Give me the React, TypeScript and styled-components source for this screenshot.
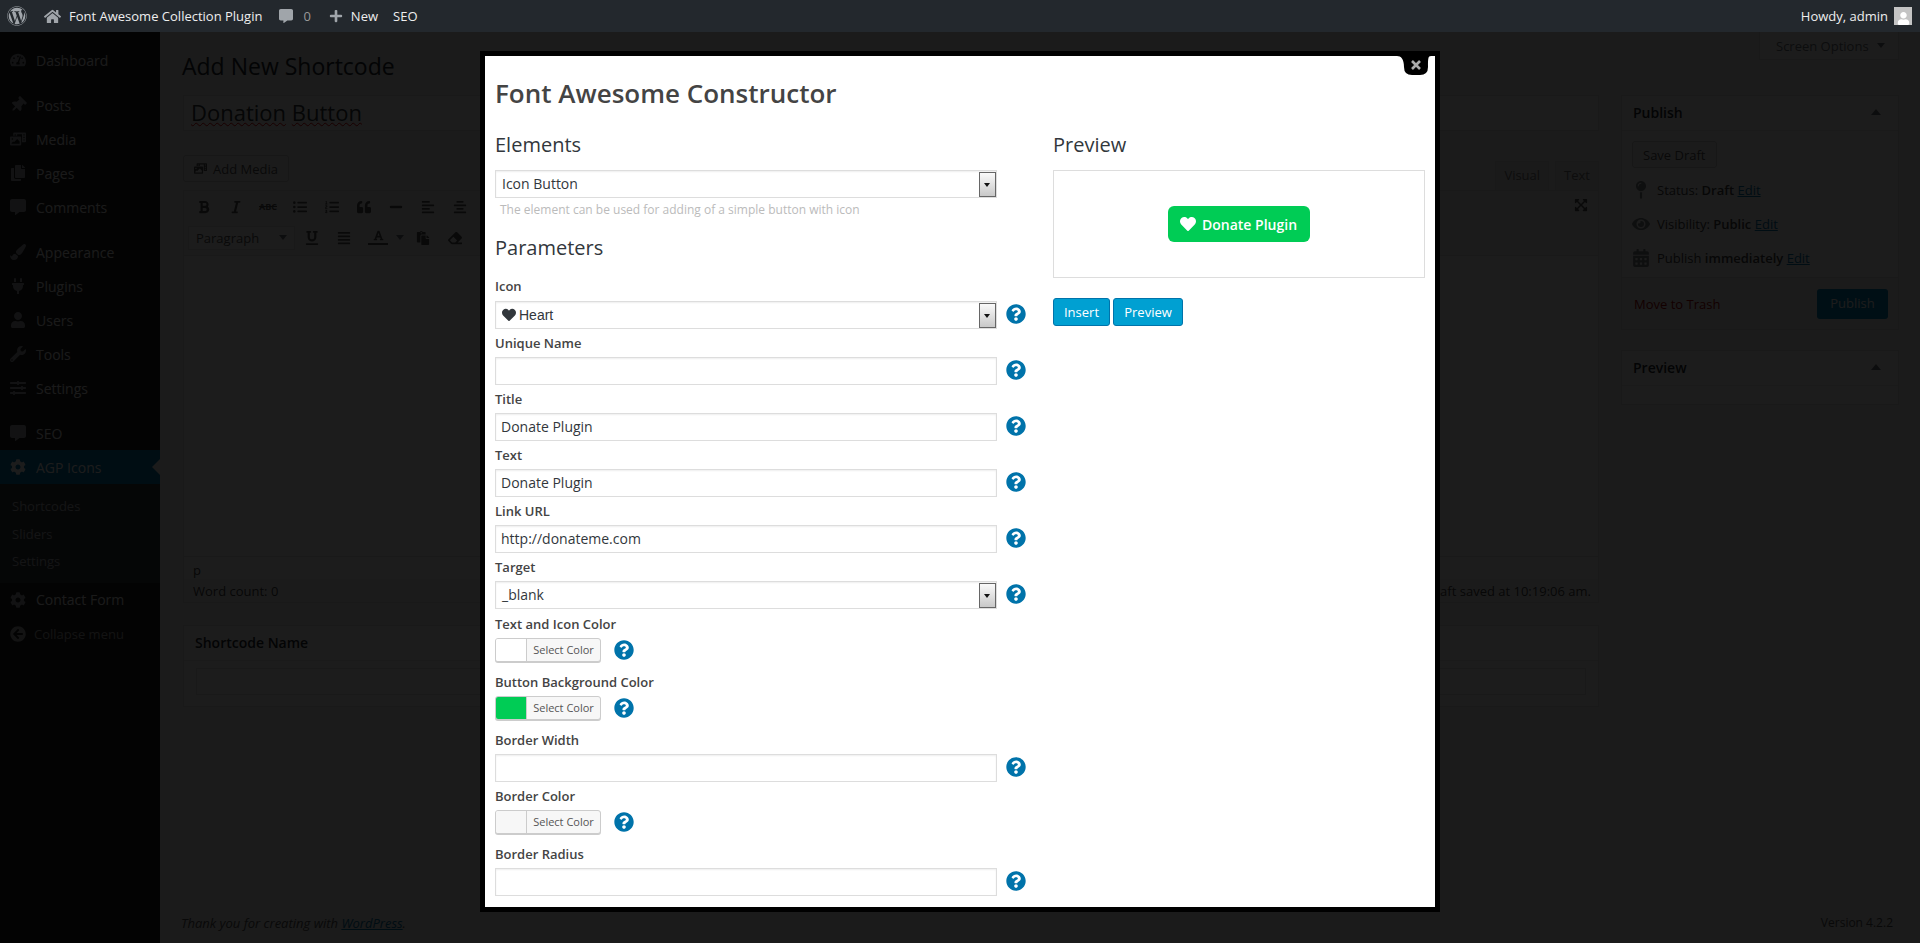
import styled, { createGlobalStyle } from "styled-components";
import {
  FaAlignCenter,
  FaAlignJustify,
  FaAlignLeft,
  FaArrowCircleLeft,
  FaBold,
  FaCalendarAlt,
  FaCog,
  FaCommentAlt,
  FaCopy,
  FaEraser,
  FaExpandArrowsAlt,
  FaEye,
  FaFont,
  FaHeart,
  FaHome,
  FaItalic,
  FaListOl,
  FaListUl,
  FaMapPin,
  FaMinus,
  FaPaintBrush,
  FaPaste,
  FaPhotoVideo,
  FaPlug,
  FaPlus,
  FaQuestionCircle,
  FaQuoteLeft,
  FaSlidersH,
  FaTachometerAlt,
  FaThumbtack,
  FaUnderline,
  FaUser,
  FaWordpress,
  FaWrench,
} from "react-icons/fa";

const Global = createGlobalStyle`
  html, body {
    margin: 0;
    height: 100%;
    overflow: hidden;
    background: #f1f1f1;
  }
  * { box-sizing: border-box; }
  body, input {
    font-family: "Open Sans", "Liberation Sans", sans-serif;
    font-size: 13px;
    color: #444;
  }
`;

const menu = [
  { label: "Dashboard", icon: <FaTachometerAlt />, gap: 1 },
  { label: "Posts", icon: <FaThumbtack style={{ transform: "rotate(45deg)" }} />, gap: 1 },
  { label: "Media", icon: <FaPhotoVideo /> },
  { label: "Pages", icon: <FaCopy /> },
  { label: "Comments", icon: <FaCommentAlt /> },
  { label: "Appearance", icon: <FaPaintBrush />, gap: 1 },
  { label: "Plugins", icon: <FaPlug /> },
  { label: "Users", icon: <FaUser /> },
  { label: "Tools", icon: <FaWrench /> },
  { label: "Settings", icon: <FaSlidersH /> },
  { label: "SEO", icon: <FaCommentAlt />, gap: 1 },
];

const HelpMark = ({ $small }: { $small?: boolean }) => (
  <Styled.Help $small={$small}>
    <FaQuestionCircle />
  </Styled.Help>
);

const TextField = ({ label, value = "" }: { label: string; value?: string }) => (
  <Styled.Field>
    <Styled.Label>{label}</Styled.Label>
    <Styled.ControlRow>
      <Styled.Input defaultValue={value} readOnly />
      <HelpMark />
    </Styled.ControlRow>
  </Styled.Field>
);

const SelectBox = ({ children, $arial }: { children: React.ReactNode; $arial?: boolean }) => (
  <Styled.Select $arial={$arial}>
    {children}
    <Styled.SelectArrow />
  </Styled.Select>
);

const ColorField = ({ label, color }: { label: string; color: string }) => (
  <Styled.ColorWrap>
    <Styled.Label>{label}</Styled.Label>
    <Styled.ControlRow>
      <Styled.Picker>
        <Styled.Swatch $color={color} />
        <Styled.PickerText>Select Color</Styled.PickerText>
      </Styled.Picker>
      <HelpMark $small />
    </Styled.ControlRow>
  </Styled.ColorWrap>
);

export default function App() {
  return (
    <Styled.Page>
      <Global />
      <Styled.AdminBar>
        <Styled.BarGroup>
          <Styled.BarLogo>
            <FaWordpress />
          </Styled.BarLogo>
          <Styled.BarItem $left={17}>
            <FaHome size={17} />
            Font Awesome Collection Plugin
          </Styled.BarItem>
          <Styled.BarItem $left={17} $muted>
            <FaCommentAlt size={14} />
            <span>0</span>
          </Styled.BarItem>
          <Styled.BarItem $left={18}>
            <FaPlus size={14} />
            New
          </Styled.BarItem>
          <Styled.BarItem $left={15}>SEO</Styled.BarItem>
        </Styled.BarGroup>
        <Styled.BarItem>
          Howdy, admin
          <Styled.Avatar>
            <FaUser size={13} />
          </Styled.Avatar>
        </Styled.BarItem>
      </Styled.AdminBar>

      <Styled.Body>
        <Styled.Sidebar>
          {menu.map((m) => (
            <Styled.MenuItem key={m.label + m.gap} $gap={!!m.gap}>
              {m.icon}
              {m.label}
            </Styled.MenuItem>
          ))}
          <Styled.MenuActive>
            <FaCog />
            AGP Icons
          </Styled.MenuActive>
          <Styled.SubMenu>
            <Styled.SubItem>Shortcodes</Styled.SubItem>
            <Styled.SubItem>Sliders</Styled.SubItem>
            <Styled.SubItem>Settings</Styled.SubItem>
          </Styled.SubMenu>
          <Styled.MenuItem>
            <FaCog />
            Contact Form
          </Styled.MenuItem>
          <Styled.Collapse>
            <FaArrowCircleLeft />
            Collapse menu
          </Styled.Collapse>
        </Styled.Sidebar>

        <Styled.Main>
          <Styled.ScreenTab>
            Screen Options
            <Styled.DownCaret />
          </Styled.ScreenTab>
          <Styled.PageTitle>Add New Shortcode</Styled.PageTitle>
          <Styled.Columns>
            <Styled.EditCol>
              <Styled.TitleBox>
                <Styled.Misspelt>Donation</Styled.Misspelt> <Styled.Misspelt>Button</Styled.Misspelt>
              </Styled.TitleBox>
              <Styled.MediaRow>
                <Styled.WpButton>
                  <FaPhotoVideo /> Add Media
                </Styled.WpButton>
                <Styled.Tabs>
                  <Styled.Tab>Visual</Styled.Tab>
                  <Styled.Tab>Text</Styled.Tab>
                </Styled.Tabs>
              </Styled.MediaRow>
              <Styled.Editor>
                <Styled.Toolbar>
                  <Styled.ToolRow>
                    <Styled.ToolIcon><FaBold /></Styled.ToolIcon>
                    <Styled.ToolIcon><FaItalic /></Styled.ToolIcon>
                    <Styled.ToolIcon><Styled.Strike>ABC</Styled.Strike></Styled.ToolIcon>
                    <Styled.ToolIcon><FaListUl /></Styled.ToolIcon>
                    <Styled.ToolIcon><FaListOl /></Styled.ToolIcon>
                    <Styled.ToolIcon><FaQuoteLeft /></Styled.ToolIcon>
                    <Styled.ToolIcon><FaMinus /></Styled.ToolIcon>
                    <Styled.ToolIcon><FaAlignLeft /></Styled.ToolIcon>
                    <Styled.ToolIcon><FaAlignCenter /></Styled.ToolIcon>
                    <Styled.ToolEnd><FaExpandArrowsAlt /></Styled.ToolEnd>
                  </Styled.ToolRow>
                  <Styled.ToolRow>
                    <Styled.FormatSelect>
                      Paragraph
                      <Styled.DownCaret />
                    </Styled.FormatSelect>
                    <Styled.ToolIcon><FaUnderline /></Styled.ToolIcon>
                    <Styled.ToolIcon><FaAlignJustify /></Styled.ToolIcon>
                    <Styled.ColorTool>
                      <Styled.ColorLetter><FaFont /></Styled.ColorLetter>
                      <Styled.DownCaret />
                    </Styled.ColorTool>
                    <Styled.ToolIcon><FaPaste /></Styled.ToolIcon>
                    <Styled.ToolIcon><FaEraser /></Styled.ToolIcon>
                  </Styled.ToolRow>
                </Styled.Toolbar>
                <Styled.TextArea />
                <Styled.PathRow>p</Styled.PathRow>
                <Styled.CountRow>
                  <span>Word count: 0</span>
                  <span>Draft saved at 10:19:06 am.</span>
                </Styled.CountRow>
              </Styled.Editor>
              <Styled.NameBox>
                <Styled.BoxHead>Shortcode Name</Styled.BoxHead>
                <Styled.NameInput />
              </Styled.NameBox>
            </Styled.EditCol>
            <Styled.SideCol>
              <Styled.Box>
                <Styled.BoxHead>
                  Publish <Styled.Caret />
                </Styled.BoxHead>
                <Styled.BoxBody>
                  <Styled.WpButton>Save Draft</Styled.WpButton>
                  <Styled.Meta>
                    <FaMapPin />
                    <span>Status: <b>Draft</b> <Styled.Link>Edit</Styled.Link></span>
                  </Styled.Meta>
                  <Styled.Meta>
                    <FaEye />
                    <span>Visibility: <b>Public</b> <Styled.Link>Edit</Styled.Link></span>
                  </Styled.Meta>
                  <Styled.Meta>
                    <FaCalendarAlt />
                    <span>Publish <b>immediately</b> <Styled.Link>Edit</Styled.Link></span>
                  </Styled.Meta>
                </Styled.BoxBody>
                <Styled.BoxFoot>
                  <Styled.Trash>Move to Trash</Styled.Trash>
                  <Styled.PublishBtn>Publish</Styled.PublishBtn>
                </Styled.BoxFoot>
              </Styled.Box>
              <Styled.PreviewBox>
                <Styled.BoxHead>
                  Preview <Styled.Caret />
                </Styled.BoxHead>
              </Styled.PreviewBox>
            </Styled.SideCol>
          </Styled.Columns>
          <Styled.Footer>
            <i>
              Thank you for creating with <Styled.Link as="span">WordPress</Styled.Link>.
            </i>
            <Styled.Version>Version 4.2.2</Styled.Version>
          </Styled.Footer>
        </Styled.Main>
      </Styled.Body>

      <Styled.Overlay />

      <Styled.Modal>
        <Styled.Close viewBox="0 0 34 19" width="34" height="19">
          <path d="M0 0H34C31 0 31 3 31 11Q31 19 23 19H15Q7 19 7 11C7 3 4 0 0 0Z" fill="#000" />
          <path d="M15 5L23 13M23 5L15 13" stroke="#aaa" strokeWidth="2.6" />
        </Styled.Close>
        <Styled.ModalTitle>Font Awesome Constructor</Styled.ModalTitle>
        <Styled.ModalGrid>
          <div>
            <Styled.SectionTitle>Elements</Styled.SectionTitle>
            <Styled.ElementRow>
              <SelectBox>Icon Button</SelectBox>
            </Styled.ElementRow>
            <Styled.Hint>The element can be used for adding of a simple button with icon</Styled.Hint>
            <Styled.ParamTitle>Parameters</Styled.ParamTitle>
            <Styled.Field>
              <Styled.FirstLabel>Icon</Styled.FirstLabel>
              <Styled.ControlRow>
                <SelectBox $arial>
                  <FaHeart size={14} /> Heart
                </SelectBox>
                <HelpMark />
              </Styled.ControlRow>
            </Styled.Field>
            <TextField label="Unique Name" />
            <TextField label="Title" value="Donate Plugin" />
            <TextField label="Text" value="Donate Plugin" />
            <TextField label="Link URL" value="http://donateme.com" />
            <Styled.LastField>
              <Styled.Label>Target</Styled.Label>
              <Styled.ControlRow>
                <SelectBox>_blank</SelectBox>
                <HelpMark />
              </Styled.ControlRow>
            </Styled.LastField>
            <ColorField label="Text and Icon Color" color="#ffffff" />
            <ColorField label="Button Background Color" color="#00cc55" />
            <TextField label="Border Width" />
            <ColorField label="Border Color" color="#f7f7f7" />
            <TextField label="Border Radius" />
          </div>
          <div>
            <Styled.SectionTitle>Preview</Styled.SectionTitle>
            <Styled.PreviewPane>
              <Styled.DonateBtn>
                <FaHeart size={16} />
                Donate Plugin
              </Styled.DonateBtn>
            </Styled.PreviewPane>
            <Styled.Actions>
              <Styled.ActionBtn $w={57}>Insert</Styled.ActionBtn>
              <Styled.ActionBtn $w={70}>Preview</Styled.ActionBtn>
            </Styled.Actions>
          </div>
        </Styled.ModalGrid>
      </Styled.Modal>
    </Styled.Page>
  );
}

const Styled = {
  Page: styled.div`
    position: relative;
    height: 943px;
    overflow: hidden;
    display: flex;
    flex-direction: column;
  `,
  AdminBar: styled.div`
    position: relative;
    z-index: 3;
    display: flex;
    justify-content: space-between;
    align-items: center;
    height: 32px;
    flex-shrink: 0;
    padding: 0 8px 0 7px;
    background: #23282d;
    color: #eee;
  `,
  BarGroup: styled.div`
    display: flex;
    align-items: center;
  `,
  BarLogo: styled.div`
    display: flex;
    font-size: 20px;
    color: #a0a5aa;
  `,
  BarItem: styled.div<{ $left?: number; $muted?: boolean }>`
    display: flex;
    align-items: center;
    gap: 8px;
    margin-left: ${(p) => p.$left ?? 0}px;
    svg {
      color: #a0a5aa;
    }
    span {
      color: ${(p) => (p.$muted ? "#999" : "inherit")};
      margin-left: 2px;
    }
  `,
  Avatar: styled.div`
    display: flex;
    align-items: flex-end;
    justify-content: center;
    width: 18px;
    height: 18px;
    margin-left: -2px;
    background: #c4c4c4;
    svg {
      color: #fff;
    }
  `,
  Body: styled.div`
    flex: 1;
    display: flex;
    min-height: 0;
  `,
  Sidebar: styled.div`
    width: 160px;
    flex-shrink: 0;
    padding-top: 11px;
    background: #1c1c1c;
    color: #eee;
    font-size: 14px;
  `,
  MenuItem: styled.div<{ $gap?: boolean }>`
    display: flex;
    align-items: center;
    gap: 10px;
    height: 34px;
    padding-left: 10px;
    margin-top: ${(p) => (p.$gap ? "11px" : "0")};
    &:first-child {
      margin-top: 0;
    }
    svg {
      width: 16px;
      height: 16px;
      color: #a0a5aa;
    }
  `,
  MenuActive: styled.div`
    position: relative;
    display: flex;
    align-items: center;
    gap: 10px;
    height: 34px;
    padding-left: 10px;
    background: #0073aa;
    color: #fff;
    svg {
      width: 16px;
      height: 16px;
    }
    &::after {
      content: "";
      position: absolute;
      right: 0;
      top: 9px;
      border: 8px solid transparent;
      border-right-color: #f1f1f1;
    }
  `,
  SubMenu: styled.div`
    padding: 9px 0 7px;
    background: #32373c;
    font-size: 13px;
  `,
  SubItem: styled.div`
    height: 27.5px;
    padding-left: 12px;
    line-height: 27px;
    color: #b4b9be;
  `,
  Collapse: styled.div`
    display: flex;
    align-items: center;
    gap: 8px;
    height: 34px;
    padding-left: 10px;
    font-size: 13px;
    color: #aaa;
    svg {
      width: 16px;
      height: 16px;
    }
  `,
  Main: styled.div`
    position: relative;
    flex: 1;
    display: flex;
    flex-direction: column;
    padding: 19px 21px 0 22px;
  `,
  ScreenTab: styled.div`
    position: absolute;
    top: 0;
    right: 21px;
    display: flex;
    align-items: center;
    gap: 8px;
    width: 140px;
    height: 28px;
    padding-left: 16px;
    background: #fff;
    border: 1px solid #ddd;
    border-top: 0;
    color: #72777c;
  `,
  DownCaret: styled.span`
    border: 4px solid transparent;
    border-bottom: 0;
    border-top: 5px solid #72777c;
  `,
  PageTitle: styled.h1`
    margin: 0;
    height: 30px;
    font-size: 23px;
    font-weight: 400;
    line-height: 30px;
    color: #23282d;
  `,
  Columns: styled.div`
    display: flex;
    gap: 22px;
    margin-top: 14px;
    padding-left: 1px;
  `,
  EditCol: styled.div`
    flex: 1;
    min-width: 0;
  `,
  SideCol: styled.div`
    width: 278px;
    flex-shrink: 0;
  `,
  TitleBox: styled.div`
    height: 36px;
    padding-left: 7px;
    border: 1px solid #ddd;
    background: #fff;
    font-size: 22px;
    line-height: 33px;
    color: #32373c;
  `,
  Misspelt: styled.span`
    text-decoration: underline wavy #d00;
    text-decoration-thickness: 1px;
  `,
  MediaRow: styled.div`
    display: flex;
    justify-content: space-between;
    height: 35px;
    margin-top: 24px;
  `,
  WpButton: styled.div`
    display: inline-flex;
    align-items: center;
    gap: 6px;
    height: 27px;
    padding: 0 10px;
    border: 1px solid #ccc;
    border-radius: 3px;
    background: #f7f7f7;
    color: #555;
  `,
  Tabs: styled.div`
    display: flex;
    align-self: flex-end;
    gap: 6px;
    height: 29px;
  `,
  Tab: styled.div`
    padding: 0 8px;
    line-height: 26px;
    border: 1px solid #ddd;
    border-bottom: 0;
    background: #ebebeb;
    color: #777;
  `,
  Editor: styled.div`
    border: 1px solid #ddd;
    background: #fff;
  `,
  Toolbar: styled.div`
    height: 65px;
    padding: 0 4px;
    background: #f5f5f5;
    border-bottom: 1px solid #ddd;
  `,
  ToolRow: styled.div`
    display: flex;
    align-items: center;
    height: 31px;
  `,
  ToolIcon: styled.div`
    display: flex;
    justify-content: center;
    width: 32px;
    font-size: 14px;
    color: #555;
  `,
  Strike: styled.span`
    font-size: 9px;
    font-weight: 700;
    text-decoration: line-through;
  `,
  ColorTool: styled.div`
    display: flex;
    align-items: center;
    gap: 8px;
    width: 47px;
    padding-left: 8px;
  `,
  ColorLetter: styled.div`
    display: flex;
    justify-content: center;
    width: 20px;
    padding-bottom: 2px;
    border-bottom: 2px solid #555;
    font-size: 11px;
    color: #555;
  `,
  ToolEnd: styled.div`
    margin-left: auto;
    margin-right: 6px;
    font-size: 14px;
    color: #555;
  `,
  FormatSelect: styled.div`
    display: flex;
    align-items: center;
    justify-content: space-between;
    width: 107px;
    height: 24px;
    margin-right: 1px;
    padding: 0 7px;
    border: 1px solid #ddd;
    background: #fdfdfd;
    color: #555;
  `,
  TextArea: styled.div`
    height: 300px;
  `,
  PathRow: styled.div`
    height: 23px;
    padding-left: 9px;
    line-height: 26px;
    border-top: 1px solid #ddd;
  `,
  CountRow: styled.div`
    display: flex;
    justify-content: space-between;
    height: 23px;
    padding: 0 7px 0 9px;
    line-height: 24px;
    background: #f7f7f7;
  `,
  NameBox: styled.div`
    height: 82px;
    margin-top: 22px;
    border: 1px solid #e5e5e5;
    background: #fff;
  `,
  NameInput: styled.div`
    height: 27px;
    margin: 7px 12px 0;
    border: 1px solid #ddd;
  `,
  Box: styled.div`
    height: 235px;
    display: flex;
    flex-direction: column;
    border: 1px solid #e5e5e5;
    background: #fff;
  `,
  PreviewBox: styled.div`
    height: 55px;
    margin-top: 20px;
    border: 1px solid #e5e5e5;
    background: #fff;
  `,
  BoxHead: styled.div`
    display: flex;
    align-items: center;
    justify-content: space-between;
    height: 35px;
    flex-shrink: 0;
    padding: 0 12px 2px 11px;
    border-bottom: 1px solid #eee;
    font-size: 14px;
    font-weight: 600;
    color: #23282d;
  `,
  Caret: styled.span`
    margin-right: 5px;
    border: 5px solid transparent;
    border-top: 0;
    border-bottom: 6px solid #72777c;
  `,
  BoxBody: styled.div`
    flex: 1;
    display: flex;
    flex-direction: column;
    align-items: flex-start;
    gap: 0;
    padding: 10px 10px 0;
    > :first-child {
      margin-bottom: 5px;
    }
  `,
  Meta: styled.div`
    display: flex;
    align-items: center;
    gap: 7px;
    height: 34px;
    white-space: pre;
    svg {
      width: 18px;
      height: 18px;
      color: #82878c;
    }
    b {
      font-weight: 600;
    }
  `,
  Link: styled.a`
    color: #0073aa;
    text-decoration: underline;
  `,
  BoxFoot: styled.div`
    display: flex;
    align-items: center;
    justify-content: space-between;
    height: 52px;
    padding: 0 10px 0 12px;
    background: #f5f5f5;
    border-top: 1px solid #ddd;
  `,
  Trash: styled.span`
    color: #a00;
  `,
  PublishBtn: styled.div`
    width: 71px;
    height: 30px;
    line-height: 29px;
    text-align: center;
    background: #0085ba;
    border-radius: 3px;
    color: #fff;
  `,
  Footer: styled.div`
    position: absolute;
    left: 21px;
    right: 27px;
    bottom: 11px;
    display: flex;
    justify-content: space-between;
    color: #555;
  `,
  Version: styled.span`
    font-size: 12px;
    line-height: 18px;
  `,
  Overlay: styled.div`
    position: absolute;
    inset: 0;
    z-index: 2;
    background: #000;
    opacity: 0.89;
  `,
  Modal: styled.div`
    position: absolute;
    z-index: 4;
    left: 480px;
    top: 51px;
    width: 960px;
    height: 861px;
    padding: 0 10px;
    overflow: hidden;
    border: 5px solid #000;
    background: #fff;
  `,
  Close: styled.svg`
    position: absolute;
    top: 0;
    right: 4px;
  `,
  ModalTitle: styled.h2`
    margin: 19px 0 0;
    height: 36px;
    font-size: 26px;
    font-weight: 600;
    line-height: 36px;
    color: #444;
  `,
  ModalGrid: styled.div`
    display: grid;
    grid-template-columns: 558px 372px;
    margin-top: 20px;
  `,
  SectionTitle: styled.h3`
    margin: 0 0 11px;
    height: 28px;
    font-size: 20px;
    font-weight: 400;
    line-height: 28px;
    color: #32373c;
  `,
  ParamTitle: styled.h3`
    margin: 15px 0 15px;
    height: 28px;
    font-size: 20px;
    font-weight: 400;
    line-height: 28px;
    color: #32373c;
  `,
  ElementRow: styled.div`
    display: flex;
    width: 502px;
  `,
  Hint: styled.div`
    height: 18px;
    margin-top: 3px;
    padding-left: 5px;
    font-size: 12px;
    line-height: 18px;
    color: #bbb;
  `,
  Field: styled.div`
    margin-bottom: 5px;
  `,
  LastField: styled.div`
    margin-bottom: 6px;
  `,
  ColorWrap: styled.div`
    margin-bottom: 11px;
  `,
  Label: styled.div`
    height: 18px;
    margin-bottom: 5px;
    font-size: 13px;
    font-weight: 600;
    line-height: 18px;
    color: #444;
  `,
  FirstLabel: styled.div`
    height: 18px;
    margin-bottom: 6px;
    font-size: 13px;
    font-weight: 600;
    line-height: 18px;
    color: #444;
  `,
  ControlRow: styled.div`
    display: flex;
    align-items: center;
    min-height: 24px;
  `,
  Input: styled.input`
    width: 502px;
    height: 28px;
    padding: 0 5px 2px;
    border: 1px solid #ddd;
    outline: 0;
    box-shadow: inset 0 1px 2px rgba(0, 0, 0, 0.07);
    font-size: 14px;
    color: #32373c;
  `,
  Select: styled.div<{ $arial?: boolean }>`
    position: relative;
    display: flex;
    align-items: center;
    gap: 3px;
    width: 502px;
    height: 28px;
    padding: 0 0 1px 6px;
    border: 1px solid #ddd;
    box-shadow: inset 0 1px 2px rgba(0, 0, 0, 0.07);
    font-family: ${(p) => (p.$arial ? '"Liberation Sans", sans-serif' : "inherit")};
    font-size: 14px;
    color: #32373c;
  `,
  SelectArrow: styled.div`
    position: absolute;
    top: 1px;
    right: 0;
    width: 17px;
    height: 25px;
    border: 1px solid #666;
    background: linear-gradient(#fafafa, #c8c8c8);
    &::after {
      content: "";
      position: absolute;
      top: 10px;
      left: 4px;
      border: 3.5px solid transparent;
      border-bottom: 0;
      border-top: 4px solid #111;
    }
  `,
  Help: styled.div<{ $small?: boolean }>`
    display: flex;
    margin-left: ${(p) => (p.$small ? "13px" : "9px")};
    margin-bottom: ${(p) => (p.$small ? "0" : "2px")};
    font-size: 20px;
    color: #0073aa;
  `,
  Picker: styled.div`
    display: flex;
    width: 106px;
    height: 24px;
    overflow: hidden;
    border: 1px solid #ccc;
    border-radius: 3px;
    box-shadow: 0 1px 0 #ccc;
    background: #f7f7f7;
  `,
  Swatch: styled.div<{ $color: string }>`
    width: 31px;
    background: ${(p) => p.$color};
    border-right: 1px solid #ccc;
  `,
  PickerText: styled.div`
    flex: 1;
    font-size: 11px;
    line-height: 22px;
    text-align: center;
    color: #555;
  `,
  PreviewPane: styled.div`
    display: flex;
    justify-content: center;
    align-items: center;
    height: 108px;
    border: 1px solid #ddd;
  `,
  DonateBtn: styled.div`
    display: flex;
    align-items: center;
    gap: 6px;
    width: 142px;
    height: 36px;
    padding-left: 12px;
    border-radius: 6px;
    background: #00cc55;
    font-size: 14px;
    font-weight: 600;
    color: #fff;
  `,
  Actions: styled.div`
    display: flex;
    gap: 3px;
    margin-top: 20px;
  `,
  ActionBtn: styled.div<{ $w: number }>`
    width: ${(p) => p.$w}px;
    height: 28px;
    line-height: 26px;
    text-align: center;
    border: 1px solid #0073aa;
    border-radius: 3px;
    background: #00a0d2;
    color: #fff;
  `,
};
